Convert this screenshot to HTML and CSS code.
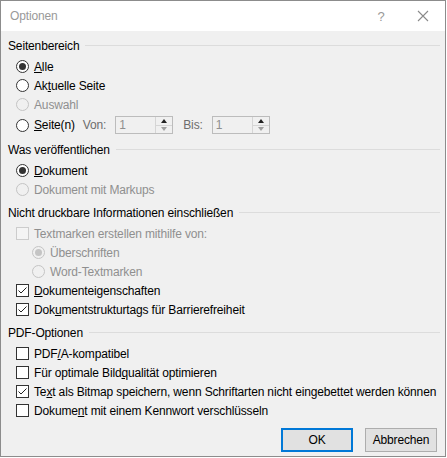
FILE: index.html
```html
<!DOCTYPE html>
<html lang="de">
<head>
<meta charset="UTF-8">
<title>Optionen</title>
<link rel="stylesheet" href="styles.css">
</head>
<body>

<div class="window">
  <div class="titlebar">
    <span class="title">Optionen</span>
    <span class="tb-help">?</span>
    <span class="tb-close">
      <svg width="12" height="12" viewBox="0 0 12 12"><path d="M1 1 L11 11 M11 1 L1 11" stroke="#8a8a8a" stroke-width="1.1" fill="none"/></svg>
    </span>
  </div>

  <div class="content">

    <div class="section">
      <div class="heading"><span>Seitenbereich</span><i class="rule"></i></div>
      <div class="row"><span class="radio checked"></span><u>A</u>lle</div>
      <div class="row"><span class="radio"></span>Ak<u>t</u>uelle Seite</div>
      <div class="row disabled"><span class="radio"></span>Auswahl</div>
      <div class="row row-range">
        <span class="radio"></span><u>S</u>eite(n)
        <span class="label lbl-von">Von:</span>
        <span class="spin"><span class="spin-val">1</span><span class="spin-btns"><i class="up"></i><i class="down"></i></span></span>
        <span class="label lbl-bis">Bis:</span>
        <span class="spin"><span class="spin-val">1</span><span class="spin-btns"><i class="up"></i><i class="down"></i></span></span>
      </div>
    </div>

    <div class="section">
      <div class="heading"><span>Was veröffentlichen</span><i class="rule"></i></div>
      <div class="row"><span class="radio checked"></span><u>D</u>okument</div>
      <div class="row disabled"><span class="radio"></span>Dokument mit Markups</div>
    </div>

    <div class="section">
      <div class="heading"><span>Nicht druckbare Informationen einschließen</span><i class="rule"></i></div>
      <div class="row disabled"><span class="check"></span>Textmarken erstellen mithilfe von:</div>
      <div class="row sub disabled"><span class="radio checked"></span>Überschriften</div>
      <div class="row sub disabled"><span class="radio"></span>Word-Textmarken</div>
      <div class="row"><span class="check checked"><svg width="13" height="13" viewBox="0 0 13 13"><path d="M2.5 6.5 L5 9 L10.5 3.5" stroke="#222" stroke-width="1" fill="none"/></svg></span><u>D</u>okumenteigenschaften</div>
      <div class="row"><span class="check checked"><svg width="13" height="13" viewBox="0 0 13 13"><path d="M2.5 6.5 L5 9 L10.5 3.5" stroke="#222" stroke-width="1" fill="none"/></svg></span>Dok<u>u</u>mentstrukturtags für Barrierefreiheit</div>
    </div>

    <div class="section">
      <div class="heading"><span>PDF-Optionen</span><i class="rule"></i></div>
      <div class="row"><span class="check"></span>PDF<u>/</u>A-kompatibel</div>
      <div class="row"><span class="check"></span>Für optimale Bild<u>q</u>ualität optimieren</div>
      <div class="row"><span class="check checked"><svg width="13" height="13" viewBox="0 0 13 13"><path d="M2.5 6.5 L5 9 L10.5 3.5" stroke="#222" stroke-width="1" fill="none"/></svg></span>Te<u>x</u>t als Bitmap speichern, wenn Schriftarten nicht eingebettet werden können</div>
      <div class="row"><span class="check"></span>Dokume<u>n</u>t mit einem Kennwort verschlüsseln</div>
    </div>

    <div class="buttons">
      <button class="btn btn-default">OK</button>
      <button class="btn">Abbrechen</button>
    </div>

  </div>
</div>

</body>
</html>
```

FILE: styles.css
```css
body {
  margin: 0;
  background-color: #ffffff;
  font-family: "Liberation Sans", Arial, sans-serif;
  font-size: 12px;
  letter-spacing: -0.15px;
  color: #000;
}
.window {
  width: 446px;
  height: 457px;
  box-sizing: border-box;
  border: 1px solid #8c8c8c;
  background-color: #f0f0f0;
  display: flex;
  flex-direction: column;
}
.titlebar {
  height: 30px;
  background-color: #fff;
  display: flex;
  align-items: center;
  color: #999;
}
.title {
  margin-left: 9px;
  font-size: 12px;
  flex: 1;
}
.tb-help {
  width: 20px;
  text-align: center;
  margin-right: 26px;
  font-size: 13px;
}
.tb-close {
  width: 12px;
  height: 12px;
  margin-right: 16px;
  display: flex;
}
.content {
  padding: 5px 5px 0 7px;
  display: flex;
  flex-direction: column;
  gap: 4px;
}
.heading {
  height: 19px;
  display: flex;
  align-items: center;
  margin-bottom: 2px;
}
.rule {
  flex: 1;
  height: 1px;
  background-color: #dcdcdc;
  margin-left: 6px;
}
.row {
  height: 19px;
  display: flex;
  align-items: center;
  padding-left: 8px;
  white-space: nowrap;
}
.row.sub {
  padding-left: 24px;
}
.row.disabled {
  color: #8f8f8f;
}
.row-range {
  height: 22px;
}
.radio {
  width: 13px;
  height: 13px;
  box-sizing: border-box;
  border: 1px solid #333;
  border-radius: 50%;
  background-color: #fff;
  margin-right: 5px;
  display: flex;
  align-items: center;
  justify-content: center;
  flex: none;
}
.radio.checked::after {
  content: "";
  width: 7px;
  height: 7px;
  border-radius: 50%;
  background-color: #333;
}
.disabled .radio {
  border-color: #c4c4c4;
  background-color: #f0f0f0;
}
.disabled .radio.checked::after {
  background-color: #c4c4c4;
}
.check {
  width: 13px;
  height: 13px;
  box-sizing: border-box;
  border: 1px solid #333;
  background-color: #fff;
  margin-right: 5px;
  flex: none;
  display: flex;
}
.check svg {
  margin: -1px;
}
.disabled .check {
  border-color: #cccccc;
  background-color: #f4f4f4;
}
.label {
  color: #6d6d6d;
}
.lbl-von {
  margin-left: 8px;
  margin-right: 9px;
}
.lbl-bis {
  margin-left: 10px;
  margin-right: 9px;
}
.spin {
  width: 58px;
  height: 18px;
  box-sizing: border-box;
  border: 1px solid #bcbcbc;
  background-color: #f0f0f0;
  display: flex;
}
.spin-val {
  flex: 1;
  color: #8f8f8f;
  padding-left: 3px;
  line-height: 16px;
}
.spin-btns {
  width: 16px;
  display: flex;
  flex-direction: column;
  border-left: 1px solid #d5d5d5;
}
.spin-btns i {
  flex: 1;
  display: flex;
  align-items: center;
  justify-content: center;
}
.spin-btns i.up {
  border-bottom: 1px solid #d5d5d5;
}
.spin-btns i.up::after {
  content: "";
  border-left: 3.5px solid transparent;
  border-right: 3.5px solid transparent;
  border-bottom: 4px solid #222;
}
.spin-btns i.down::after {
  content: "";
  border-left: 3.5px solid transparent;
  border-right: 3.5px solid transparent;
  border-top: 4px solid #a0a0a0;
}
.buttons {
  display: flex;
  justify-content: flex-end;
  gap: 12px;
  margin-top: 4px;
  padding-right: 3px;
}
.btn {
  width: 72px;
  height: 24px;
  box-sizing: border-box;
  border: 1px solid #adadad;
  background-color: #e1e1e1;
  font-family: inherit;
  font-size: 12px;
  letter-spacing: inherit;
  color: #000;
  padding: 0;
}
.btn-default {
  border: 2px solid #0078d7;
}
```
